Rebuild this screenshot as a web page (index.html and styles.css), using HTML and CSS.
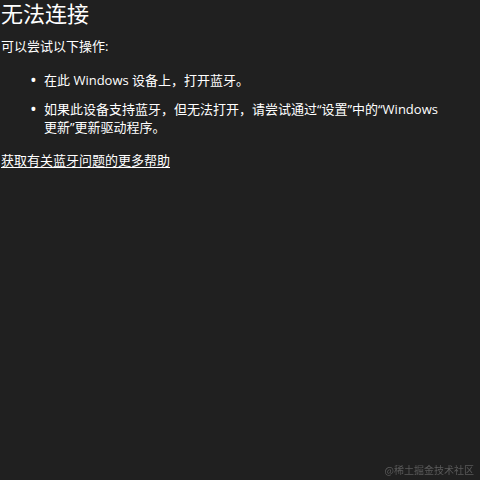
FILE: index.html
```html
<!DOCTYPE html>
<html lang="zh-CN">
<head>
<meta charset="utf-8">
<title>无法连接</title>
<link rel="stylesheet" href="styles.css">
</head>
<body>
<main class="page">
  <h1 class="title">无法连接</h1>
  <p class="subtitle">可以尝试以下操作:</p>
  <ul class="tips">
    <li class="tip">在此 Windows 设备上，打开蓝牙。</li>
    <li class="tip">如果此设备支持蓝牙，但无法打开，请尝试通过“设置”中的“Windows 更新”更新驱动程序。</li>
  </ul>
  <a class="help" href="#">获取有关蓝牙问题的更多帮助</a>
</main>
<div class="watermark">@稀土掘金技术社区</div>
</body>
</html>
```
FILE: styles.css
```css
html, body {
  margin: 0;
  padding: 0;
  height: 100%;
  background: #202020;
}
body {
  color: #ffffff;
  font-family: "Open Sans", "Noto Sans CJK SC", sans-serif;
}
.page {
  display: flex;
  flex-direction: column;
  align-items: flex-start;
  padding-left: 1px;
}
.title {
  margin: 0;
  font-size: 22px;
  line-height: 26px;
  font-weight: 400;
}
.subtitle {
  margin: 10px 0 0;
  font-size: 13px;
  line-height: 20px;
}
.tips {
  list-style: none;
  margin: 15px 0 0;
  padding: 0;
  width: 449px;
  display: flex;
  flex-direction: column;
  gap: 11px;
}
.tip {
  display: flex;
  font-size: 13px;
  line-height: 18px;
}
.tip::before {
  content: "•";
  flex: none;
  width: 14px;
  margin-left: 29px;
  font-size: 18px;
  line-height: 18px;
}
.help {
  margin-top: 14px;
  font-size: 13px;
  line-height: 20px;
  color: #ffffff;
  text-decoration: underline;
  text-underline-offset: 2px;
}
.watermark {
  position: fixed;
  right: 6px;
  bottom: 3px;
  font-family: "Noto Sans CJK SC", sans-serif;
  font-size: 10px;
  line-height: 14px;
  color: #5a5a5a;
}
```
